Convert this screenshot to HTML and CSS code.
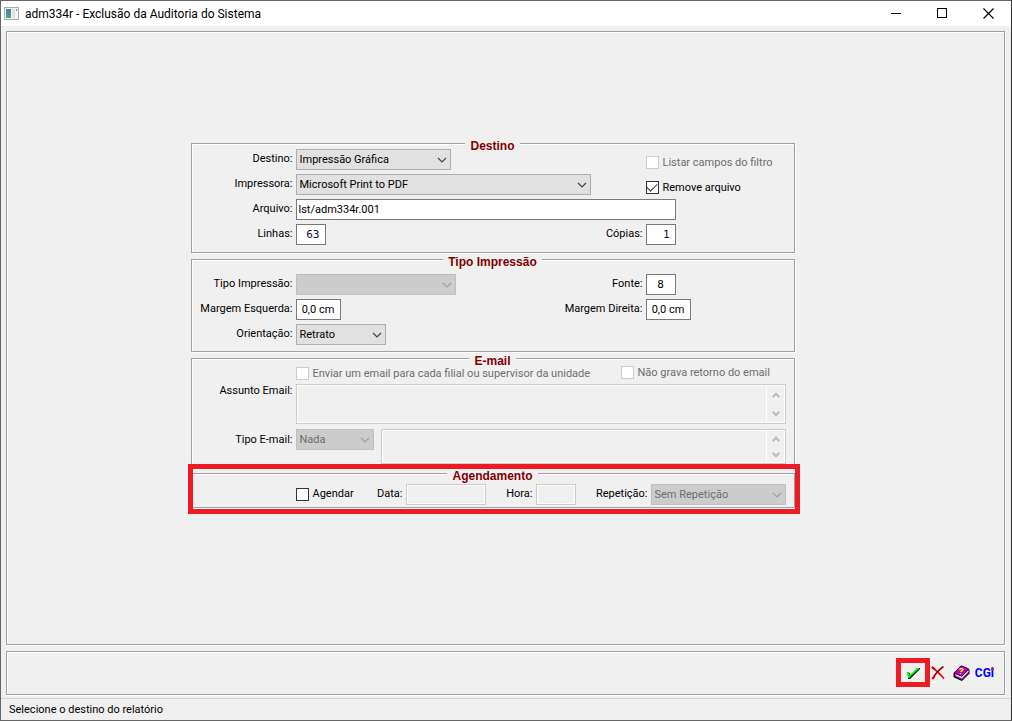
FILE: index.html
```html
<!DOCTYPE html>
<html lang="pt-BR">
<head>
<meta charset="utf-8">
<title>adm334r - Exclusão da Auditoria do Sistema</title>
<link rel="stylesheet" href="styles.css">
</head>
<body>
<svg class="defs" aria-hidden="true">
  <symbol id="down" viewBox="0 0 10 6"><path d="M1 1l4 4 4-4" fill="none" stroke="currentColor" stroke-width="1.2"/></symbol>
  <symbol id="sdown" viewBox="0 0 8 6"><path d="M.7 .8L4 4.2 7.300.8" fill="none" stroke="currentColor" stroke-width="2"/></symbol>
  <symbol id="sup" viewBox="0 0 8 6"><path d="M.7 5.200L4 1.800 7.300 5.200" fill="none" stroke="currentColor" stroke-width="2"/></symbol>
</svg>
<header class="titlebar">
  <svg class="app-icon" width="15" height="13" viewBox="0 0 15 13"><defs><linearGradient id="g" x1="0" y1="0" x2="0" y2="1"><stop offset="0" stop-color="#4b7fa6"/><stop offset="1" stop-color="#4fa878"/></linearGradient></defs><rect x=".5" y=".5" width="14" height="12" fill="#f4f4f4" stroke="#a9abae"/><rect x="2" y="2" width="5" height="9" fill="url(#g)"/><rect x="8" y="2" width="3" height="9" fill="#dfe3e6"/><rect x="12" y="2" width="1" height="2" fill="#4b9aba"/></svg>
  <h1>adm334r - Exclusão da Auditoria do Sistema</h1>
  <button class="win" aria-label="Minimizar"><svg width="11" height="11"><path d="M0 5.500h10" stroke="#000"/></svg></button>
  <button class="win" aria-label="Maximizar"><svg width="11" height="11"><rect x=".5" y=".5" width="9" height="9" fill="none" stroke="#000"/></svg></button>
  <button class="win" aria-label="Fechar"><svg width="11" height="11"><path d="M.5 .5l10 10M10.500.5l-10 10" stroke="#000" stroke-width="1.200"/></svg></button>
</header>
<main class="panel main">
  <form class="form">
    <fieldset class="group">
      <legend>Destino</legend>
      <div class="grid">
        <label for="destino">Destino:</label>
        <span class="select w155"><select id="destino"><option>Impressão Gráfica</option></select><svg><use href="#down"/></svg></span>
        <label class="check low off"><input type="checkbox" disabled>Listar campos do filtro</label>
        <label for="impressora">Impressora:</label>
        <span class="select w295"><select id="impressora"><option>Microsoft Print to PDF</option></select><svg><use href="#down"/></svg></span>
        <label class="check low"><input type="checkbox" checked>Remove arquivo</label>
        <label for="arquivo">Arquivo:</label>
        <input class="w380 wide" id="arquivo" value="lst/adm334r.001">
        <label for="linhas">Linhas:</label>
        <div class="split"><input class="w30 num navy" id="linhas" value="63"><label for="copias">Cópias:</label></div>
        <input class="w30 num navy" id="copias" value="1">
      </div>
    </fieldset>
    <fieldset class="group print">
      <legend>Tipo Impressão</legend>
      <div class="grid">
        <label for="tipo">Tipo Impressão:</label>
        <div class="split"><span class="select w160 off"><select id="tipo" disabled><option></option></select><svg><use href="#down"/></svg></span><label for="fonte">Fonte:</label></div>
        <input class="w30 num center" id="fonte" value="8">
        <label for="me">Margem Esquerda:</label>
        <div class="split"><input class="w45 center" id="me" value="0,0 cm"><label for="md">Margem Direita:</label></div>
        <input class="w45 center" id="md" value="0,0 cm">
        <label for="orient">Orientação:</label>
        <span class="select w90"><select id="orient"><option>Retrato</option></select><svg><use href="#down"/></svg></span>
      </div>
    </fieldset>
    <fieldset class="group email">
      <legend>E-mail</legend>
      <div class="options">
        <label class="check low off"><input type="checkbox" disabled>Enviar um email para cada filial ou supervisor da unidade</label>
        <label class="check retorno off"><input type="checkbox" disabled>Não grava retorno do email</label>
      </div>
      <div class="mail">
        <label for="assunto">Assunto Email:</label>
        <div class="memo"><textarea id="assunto" disabled></textarea><span class="scroll"><svg><use href="#sup"/></svg><svg><use href="#sdown"/></svg></span></div>
      </div>
      <div class="mail body">
        <label for="tmail">Tipo E-mail:</label>
        <span class="select w78 off"><select id="tmail" disabled><option>Nada</option></select><svg><use href="#down"/></svg></span>
        <div class="memo"><textarea aria-label="Mensagem" disabled></textarea><span class="scroll"><svg><use href="#sup"/></svg><svg><use href="#sdown"/></svg></span></div>
      </div>
    </fieldset>
    <fieldset class="group schedule">
      <legend>Agendamento</legend>
      <div class="when">
        <label class="check"><input type="checkbox">Agendar</label>
        <label for="data">Data:</label><input id="data" disabled>
        <label for="hora">Hora:</label><input id="hora" disabled>
        <label for="rep">Repetição:</label>
        <span class="select off"><select id="rep" disabled><option>Sem Repetição</option></select><svg><use href="#down"/></svg></span>
      </div>
    </fieldset>
    <div class="marker"></div>
  </form>
</main>
<div class="panel actions">
  <button class="tool ok" aria-label="Confirmar"><svg width="14" height="14" viewBox="0 0 14 14"><path d="M2 7h2v3l8-8h2v1L4 13H2z" fill="#000"/><path d="M1 6h2l1 3 7-7h2v1L4 11v1H2z" fill="#00e800"/></svg></button>
  <button class="tool" aria-label="Cancelar"><svg width="14" height="14" viewBox="0 0 14 14"><path d="M1 1.500C5 4 9 8 13 12.500" fill="none" stroke="#e00000" stroke-width="1.600"/><path d="M12.500.5C9 3 4 8 1.500 13" fill="none" stroke="#a00000" stroke-width="1.600"/><path d="M1 1l3 2.500M1.500 13l2-3" stroke="#e00000" stroke-width="2.200"/></svg></button>
  <button class="tool" aria-label="Ajuda"><svg width="17" height="16" viewBox="0 0 17 16"><path d="M1 8v4l8 3.500 7-7V4.500z" fill="#800080" stroke="#000"/><path d="M2.500 10.500L9 13.500l6.500-7V5L9 11.500 2.500 9z" fill="#fff"/><path d="M3 10.800l6 2.500 6-6" fill="none" stroke="#999" stroke-width=".6"/><path d="M1 8L8 .8l7.500 3L9 11.200z" fill="#c000c0" stroke="#400040"/><path d="M6.500 4.500C7.500 3 10.500 3.500 9.800 5 9.300 6 8 5.800 7.800 7M7.500 8v1" fill="none" stroke="#ff0" stroke-width="1.400"/></svg></button>
  <button class="tool cgi">CGi</button>
</div>
<footer class="status">Selecione o destino do relatório</footer>
</body>
</html>
```
FILE: styles.css
```css
* { box-sizing: border-box; }
body {
  margin: 0;
  min-height: 100vh;
  display: flex;
  flex-direction: column;
  border: 1px solid #666;
  border-right-color: #333;
  background: #f0f0f0;
  color: #000;
  font: 11px/14px Roboto, "Liberation Sans", sans-serif;
}
.defs { position: absolute; width: 0; height: 0; }
button, input, select, textarea { font: inherit; color: inherit; margin: 0; border-radius: 0; }
button { border: 0; padding: 0; background: none; }
.titlebar { display: flex; align-items: center; height: 25px; padding-left: 3px; background: #fff; }
.titlebar h1 { flex: 1; margin: 0 0 0 6px; font: 12px/16px Roboto, sans-serif; }
.win { width: 46px; height: 25px; display: grid; place-items: center; }
.panel { border: 1px solid #a0a0a0; box-shadow: inset 1px 1px #fff, 1px 1px #fff; margin: 0 6px 0 5px; }
.main { flex: 1; margin-top: 5px; display: flex; align-items: center; justify-content: center; padding: 0 26px 30px 0; }
.form { position: relative; width: 604px; display: flex; flex-direction: column; gap: 2px; }
.group { margin: 0; min-width: 0; border: 1px solid #a0a0a0; box-shadow: inset 1px 1px #fff, 1px 1px #fff; padding: 0 0 7px; }
.group legend {
  height: 10px;
  margin: 0 auto;
  padding: 4px 5px 0;
  background: #f0f0f0;
  color: #800000;
  font: bold 12px/6px "Liberation Sans", Arial, sans-serif;
}
.print { padding: 9px 0 6px; }
.email { padding: 2px 0; }
.schedule { padding: 5px 0 2px; }
.grid { display: grid; grid-template-columns: 101px 1fr 148px; grid-auto-rows: 21px; gap: 4px 3px; align-items: center; }
.grid > label, .mail > label, .when > label { text-align: right; white-space: nowrap; }
.split { display: flex; justify-content: space-between; align-items: center; }
.wide { grid-column: span 2; }
input, textarea { border: 1px solid #7a7a7a; background: #fff; }
input { height: 21px; padding: 0 2px; }
input:disabled { border-color: #ccc; background: #f0f0f0; box-shadow: inset 0 0 0 1px #fff; }
.num { font-family: "DejaVu Sans Mono", monospace; font-size: 11px; text-align: right; padding-right: 5px; }
.navy { color: #101040; }
input.center { text-align: center; padding: 0 2px; }
.check { display: flex; align-items: center; gap: 4px; white-space: nowrap; }
.low { align-self: end; }
.off { color: #6d6d6d; }
.check input {
  appearance: none;
  flex: none;
  width: 13px;
  height: 13px;
  padding: 0;
  border: 1px solid #333;
  background: #fff;
  box-shadow: none;
  display: grid;
  place-items: start center;
}
.check input:disabled { border-color: #ccc; }
.check input:checked::before {
  content: "";
  width: 9px;
  height: 5px;
  margin-top: 1px;
  border: solid #333;
  border-width: 0 0 1px 1px;
  rotate: -45deg;
}
.select { position: relative; display: block; color: #000; }
.select select {
  display: block;
  width: 100%;
  height: 21px;
  padding: 1px 18px 0 3px;
  appearance: none;
  border: 1px solid #adadad;
  background: #e1e1e1;
}
.select svg { position: absolute; right: 4px; top: 8px; width: 10px; height: 6px; color: #444; pointer-events: none; }
.select.off select { background: #ccc; border-color: #bfbfbf; color: #6d6d6d; opacity: 1; }
.select.off svg { color: #a0a0a0; }
.w30 { width: 30px; }
.w45 { width: 45px; }
.w78 { width: 78px; }
.w90 { width: 90px; }
.w155 { width: 155px; }
.w160 { width: 160px; }
.w295 { width: 295px; }
.w380 { width: 380px; }
.options { display: flex; justify-content: space-between; height: 15px; padding-left: 104px; }
.retorno { align-self: start; width: 173px; }
.mail { display: flex; margin: 3px 8px 0 0; }
.mail > label { width: 101px; margin-right: 3px; }
.memo { flex: 1; display: flex; height: 40px; border: 1px solid #ccc; box-shadow: inset 0 0 0 1px #fff; }
.memo textarea { flex: 1; min-width: 0; border: 0; border-right: 1px solid #fff; background: none; resize: none; overflow: hidden; }
.scroll { width: 18px; padding: 7px 4px 6px 5px; display: flex; flex-direction: column; justify-content: space-between; color: #bcbcbc; }
.scroll svg { width: 8px; height: 6px; }
.body { margin-top: 5px; }
.body > label { padding-top: 4px; }
.body .memo { height: 35px; margin-left: 7px; }
.body .scroll { padding-top: 6px; padding-bottom: 5px; }
.when { display: grid; grid-template-columns: 57px 47px 80px 44px 40px 69px 1fr; gap: 3px; align-items: center; padding: 0 8px 0 104px; }
.when > input { width: 100%; }
.marker { position: absolute; left: -3px; right: -5px; bottom: -6px; height: 50px; border: 5px solid #ed1c24; pointer-events: none; }
.actions { display: flex; align-items: center; justify-content: flex-end; height: 44px; margin-top: 6px; padding: 0 10px 1px; }
.tool { display: block; }
.tool svg { display: block; }
.ok { width: 34px; height: 29px; padding: 0 5px; border: 5px solid #ed1c24; }
.tool + .tool { margin-left: 8px; }
.ok + .tool { margin-left: 1px; }
.tool + .cgi { position: relative; margin-left: 5px; color: #00f; font: bold 12px/14px "Liberation Sans Narrow", Roboto, sans-serif; }
.cgi::after { content: ""; position: absolute; right: 0; top: 2px; width: 3px; height: 2px; background: #e02020; }
.status { margin-top: 3px; padding: 4px 8px 3px; height: 22px; border-top: 1px solid #d4d4d4; }
```
